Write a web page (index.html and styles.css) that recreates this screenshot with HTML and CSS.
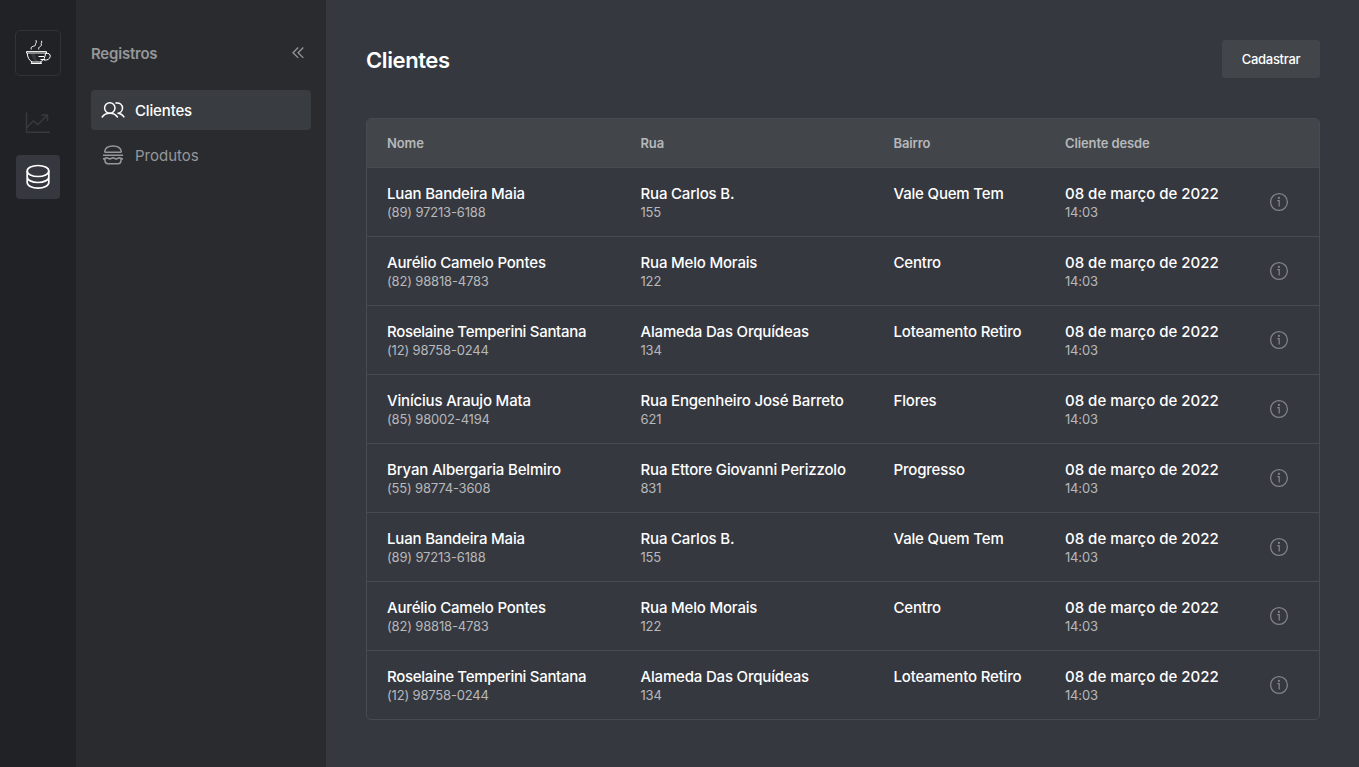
FILE: index.html
```html
<!DOCTYPE html>
<html lang="pt-BR">
<head>
<meta charset="utf-8">
<title>Clientes</title>
<link rel="stylesheet" href="styles.css">
</head>
<body>
<svg class="defs" width="0" height="0">
  <symbol id="info" viewBox="0 0 20 20"><g fill="none" stroke="currentColor" stroke-width="1.25"><circle cx="10" cy="10" r="8.4"/><path d="M8.3 8.500h1.900v6"/></g><circle cx="9.900" cy="5.900" r="1.100" fill="currentColor"/></symbol>
</svg>
<div class="app">
  <nav class="rail">
    <a class="logo"><svg width="28" height="28" viewBox="0 0 28 28" fill="none" stroke="#fff" stroke-width="1" stroke-linejoin="round"><path d="M7 15l2 5 4 3.500h2l-3-4-1-4.500z" fill="#363840" stroke="none"/><path d="M2.500 12.500h20v1.500h-20z" stroke-width=".9"/><path d="M3.200 14c.2 4.200 2 7.600 4.800 8.800l-.8 1.700h10.300l-.8-1.700c3-1.200 4.600-4.600 4.800-8.800M8 23h9"/><path d="M22 14.500c2.700-.7 4.500.8 4.200 3-.3 2.500-3 4-6.200 3.600M14.500 17.500h5.500M16.500 20.500h4.500"/><path d="M7.300 10.500c-1.700-4.300 5.500-2.500 4.200-5.300-.4-.8 1.600-.8.500-4M14.800 10.500c-1-3.500 3.900-2.700 2.400-5.400-.5-1 1.300-1.300.3-3.300"/></svg></a>
    <a class="rail-item chart"><svg width="26" height="24" viewBox="0 0 26 24" fill="none" stroke="currentColor" stroke-width="1.500" stroke-linecap="round" stroke-linejoin="round"><path d="M1.500 2v19.200H24.500M2 16.500l6.500-6.700 4.200 3.900L22 4.400M16.800 4h5.700v5.500"/></svg></a>
    <a class="rail-item active"><svg width="26" height="28" viewBox="0 0 26 28" fill="none" stroke="currentColor" stroke-width="1.700"><ellipse cx="13" cy="8" rx="10.800" ry="5.500"/><path d="M2.200 8v6c0 3 4.800 5.500 10.800 5.500s10.800-2.500 10.800-5.500V8M2.200 14v5.600c0 3 4.800 5.500 10.800 5.500s10.800-2.500 10.800-5.500V14"/></svg></a>
  </nav>
  <aside class="sidebar">
    <header class="sidebar-head"><span>Registros</span>
      <svg width="14" height="14" viewBox="0 0 14 14" fill="none" stroke="currentColor" stroke-width="1.300"><path d="M7.200 1.500L2 6.700l5.200 5.200M12.300 1.500L7.100 6.700l5.200 5.200"/></svg>
    </header>
    <a class="menu-item selected"><svg width="24" height="20" viewBox="0 0 24 20" fill="none" stroke="currentColor" stroke-width="1.500" stroke-linecap="round"><circle cx="8.800" cy="8" r="5.200"/><path d="M1.200 17c1.700-2.500 4.500-3.700 7.600-3.700s5.900 1.200 7.600 3.700M15 3.100c3.500-.9 6.500 1.600 6.500 4.900 0 2.900-2.200 5.200-5 5.200 2.700.1 4.800 1.300 6.400 3.700"/></svg><span>Clientes</span></a>
    <a class="menu-item"><svg width="24" height="22" viewBox="0 0 24 22" fill="none" stroke="currentColor" stroke-width="1.500" stroke-linejoin="round"><path d="M3.700 7.500c.5-3.500 4-5.500 8.300-5.500s7.800 2 8.300 5.500c0 .6-.4.800-.8.800h-15c-.5 0-.8-.3-.8-.8zM2 11.300h20"/><path d="M2 15l3.800-1.200 3 1.200 3.200-1.200 3.200 1.200 3-1.200L22 15M4 15v1.800c0 1.800 1.200 2.900 3 2.900h10c1.800 0 3-1.100 3-2.900V15"/></svg><span>Produtos</span></a>
  </aside>
  <main class="content">
    <header class="page-head"><h1>Clientes</h1><button class="button">Cadastrar</button></header>
    <section class="table">
      <div class="row head"><span>Nome</span><span>Rua</span><span>Bairro</span><span>Cliente desde</span></div>
      <div class="row"><div><b>Luan Bandeira Maia</b><small>(89) 97213-6188</small></div><div><b>Rua Carlos B.</b><small>155</small></div><div><b>Vale Quem Tem</b></div><div class="date"><b>08 de março de 2022</b><small>14:03</small></div><svg class="info"><use href="#info"/></svg></div>
      <div class="row"><div><b>Aurélio Camelo Pontes</b><small>(82) 98818-4783</small></div><div><b>Rua Melo Morais</b><small>122</small></div><div><b>Centro</b></div><div class="date"><b>08 de março de 2022</b><small>14:03</small></div><svg class="info"><use href="#info"/></svg></div>
      <div class="row"><div><b class="long">Roselaine Temperini Santana</b><small>(12) 98758-0244</small></div><div><b>Alameda Das Orquídeas</b><small>134</small></div><div><b>Loteamento Retiro</b></div><div class="date"><b>08 de março de 2022</b><small>14:03</small></div><svg class="info"><use href="#info"/></svg></div>
      <div class="row"><div><b>Vinícius Araujo Mata</b><small>(85) 98002-4194</small></div><div><b>Rua Engenheiro José Barreto</b><small>621</small></div><div><b>Flores</b></div><div class="date"><b>08 de março de 2022</b><small>14:03</small></div><svg class="info"><use href="#info"/></svg></div>
      <div class="row"><div><b>Bryan Albergaria Belmiro</b><small>(55) 98774-3608</small></div><div><b>Rua Ettore Giovanni Perizzolo</b><small>831</small></div><div><b>Progresso</b></div><div class="date"><b>08 de março de 2022</b><small>14:03</small></div><svg class="info"><use href="#info"/></svg></div>
      <div class="row"><div><b>Luan Bandeira Maia</b><small>(89) 97213-6188</small></div><div><b>Rua Carlos B.</b><small>155</small></div><div><b>Vale Quem Tem</b></div><div class="date"><b>08 de março de 2022</b><small>14:03</small></div><svg class="info"><use href="#info"/></svg></div>
      <div class="row"><div><b>Aurélio Camelo Pontes</b><small>(82) 98818-4783</small></div><div><b>Rua Melo Morais</b><small>122</small></div><div><b>Centro</b></div><div class="date"><b>08 de março de 2022</b><small>14:03</small></div><svg class="info"><use href="#info"/></svg></div>
      <div class="row"><div><b class="long">Roselaine Temperini Santana</b><small>(12) 98758-0244</small></div><div><b>Alameda Das Orquídeas</b><small>134</small></div><div><b>Loteamento Retiro</b></div><div class="date"><b>08 de março de 2022</b><small>14:03</small></div><svg class="info"><use href="#info"/></svg></div>
    </section>
  </main>
</div>
</body>
</html>
```
FILE: styles.css
```css
* { box-sizing: border-box; }
body { margin: 0; background: #363840; color: #fff; font-family: Inter, "Liberation Sans", sans-serif; overflow: hidden; }
.defs { display: none; }
.app { display: flex; height: 100vh; }
.rail { width: 76px; flex: none; background: #212226; display: flex; flex-direction: column; align-items: center; padding-top: 30px; }
.logo { width: 46px; height: 46px; border: 1px solid #323338; border-radius: 5px; display: flex; align-items: center; justify-content: center; margin-bottom: 25px; }
.rail-item { width: 44px; height: 44px; border-radius: 4px; display: flex; align-items: center; justify-content: center; }
.chart { color: #37393f; margin-bottom: 10px; }
.active { background: #363840; }
.sidebar { width: 250px; flex: none; background: #2a2b2e; padding: 43px 15px; }
.sidebar-head { height: 20px; margin-bottom: 27px; display: flex; align-items: center; justify-content: space-between; color: #95979a; font-size: 15px; font-weight: 600; letter-spacing: -.22px; padding-right: 6px; }
.menu-item { height: 40px; margin-bottom: 5px; border-radius: 4px; padding-left: 10px; display: flex; align-items: center; gap: 10px; color: #95979a; font-size: 15px; letter-spacing: 0; }
.selected { background: #393c40; color: #fff; font-weight: 500; letter-spacing: -.15px; }
.content { flex: 1; padding: 40px 39px 0 40px; }
.page-head { display: flex; justify-content: space-between; height: 78px; align-items: flex-start; }
h1 { margin: 0; font-size: 22px; line-height: 40px; font-weight: 600; letter-spacing: -.4px; }
.button { width: 98px; height: 38px; padding: 0; border: 0; border-radius: 3px; background: #42464b; color: #fff; font: 500 13px Inter, sans-serif; letter-spacing: -.3px; }
.table { border: 1px solid #484b52; border-radius: 5px; overflow: hidden; }
.row { display: grid; grid-template-columns: 253.500px 253px 171.500px 194px 1fr; height: 69px; padding: 16px 0 0 20px; border-bottom: 1px solid #484b52; }
.row:last-child { border-bottom: 0; height: 68px; }
.head { height: 49px; padding-top: 0; align-items: center; background: #42464b; color: #b6b8ba; font-size: 13px; font-weight: 600; letter-spacing: -.12px; }
b, small { display: block; white-space: nowrap; }
b { font-size: 15px; line-height: 20px; font-weight: 500; letter-spacing: -.18px; }
.long { letter-spacing: -.3px; }
.date b { letter-spacing: 0; }
small { font-size: 13px; line-height: 17px; color: #b6b8ba; letter-spacing: -.17px; }
.info { width: 20px; height: 20px; color: #828488; margin: 8px 0 0 10px; }
```
